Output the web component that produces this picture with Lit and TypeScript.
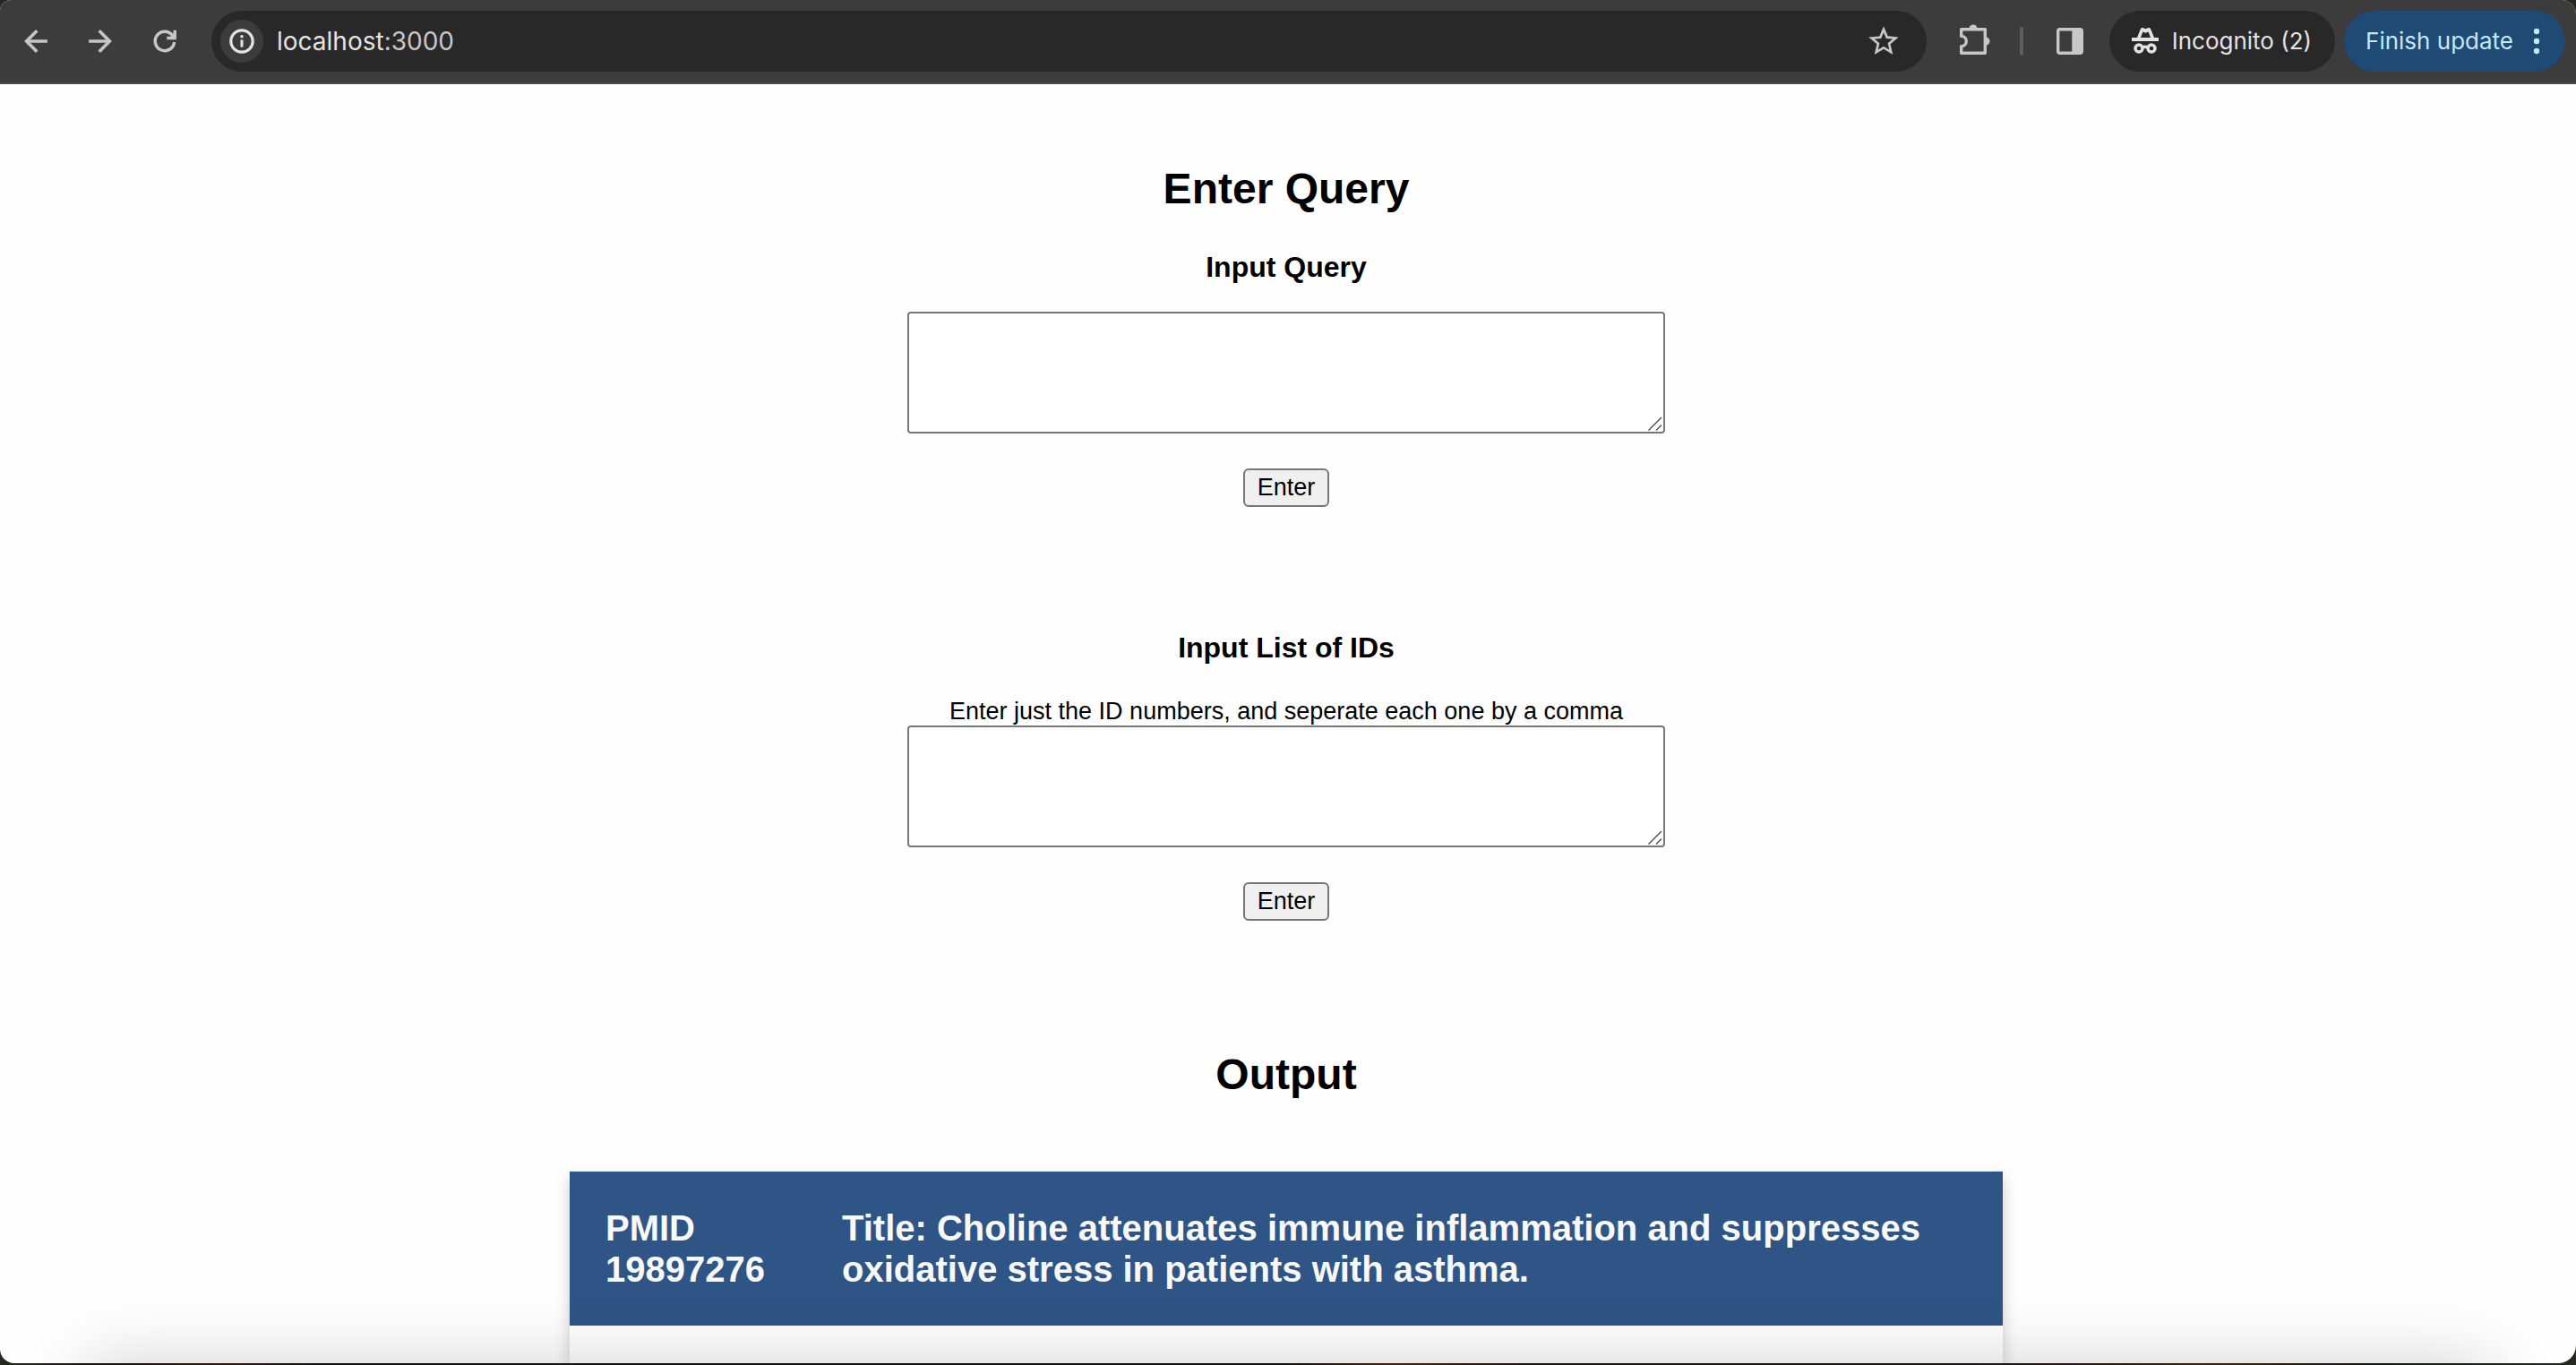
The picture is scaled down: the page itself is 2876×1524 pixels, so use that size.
import { LitElement, html, css, svg } from "lit";
import { customElement, property } from "lit/decorators.js";

const icons = {
  back: svg`<path stroke="currentColor" stroke-width=".3" d="M20 11H7.83l5.59-5.59L12 4l-8 8 8 8 1.410-1.410L7.830 13H20v-2z" />`,
  forward: svg`<path stroke="currentColor" stroke-width=".3" d="M4 11h12.170l-5.590-5.590L12 4l8 8-8 8-1.410-1.410L16.170 13H4v-2z" />`,
  star: svg`<path d="M22 9.24l-7.19-.62L12 2 9.19 8.63 2 9.24l5.46 4.73L5.82 21 12 17.27 18.18 21l-1.63-7.03L22 9.24zM12 15.4l-3.76 2.27 1-4.28-3.32-2.88 4.38-.38L12 6.1l1.71 4.04 4.38.38-3.32 2.88 1 4.28L12 15.4z" />`,
};

@customElement("browser-toolbar")
class BrowserToolbar extends LitElement {
  static styles = css`
    :host { display: block; font-family: Inter, "Liberation Sans", sans-serif; }
    .bar { display: flex; align-items: center; box-sizing: border-box; height: 94px; padding: 0 12px 0 14px; background: #3c3c3c; border-bottom: 2px solid #4a4a4a; }
    button { display: flex; flex: none; align-items: center; justify-content: center; margin: 0; padding: 0; border: 0; background: none; color: #c7c7c7; font: inherit; white-space: nowrap; }
    svg { display: block; flex: none; fill: currentColor; }
    .nav { display: flex; gap: 20px; }
    .nav button, .star, .tool { width: 52px; height: 52px; }
    .omnibox { flex: 1; display: flex; align-items: center; box-sizing: border-box; height: 68px; margin-left: 26px; padding: 0 22px 0 10px; border-radius: 34px; background: #282828; }
    .info { width: 48px; height: 48px; border-radius: 24px; background: #3c3c3c; color: #e3e3e3; }
    .url { flex: 1; padding-left: 15px; font-size: 28px; line-height: 34px; color: #c7c7c7; }
    .host { color: #e3e3e3; }
    .tools { display: flex; align-items: center; gap: 26px; padding: 0 18px 0 26px; }
    .rule { width: 4px; height: 32px; border-radius: 2px; background: #5e5e5e; }
    .pill { height: 68px; border-radius: 34px; font-size: 26px; line-height: 32px; }
    .incognito { gap: 14px; padding: 0 26px 0 24px; background: #282828; color: #e3e3e3; }
    .update { gap: 22px; margin-left: 10px; padding: 0 28px 0 24px; background: #1f4a73; color: #c2e7ff; }
  `;

  render() {
    return html`
      <header class="bar">
        <nav class="nav" aria-label="History">
          <button aria-label="Back"><svg width="38" height="38" viewBox="0 0 24 24">${icons.back}</svg></button>
          <button aria-label="Forward"><svg width="38" height="38" viewBox="0 0 24 24">${icons.forward}</svg></button>
          <button aria-label="Reload">
            <svg width="32" height="32" viewBox="0 0 32 32">
              <path fill="none" stroke="currentColor" stroke-width="3.5" d="M26.600 17A10.700 10.700 0 1 1 25 10.200L27 12.500M27.200 3.700V12.500H18.300" />
            </svg>
          </button>
        </nav>
        <div class="omnibox">
          <button class="info" aria-label="Site information">
            <svg width="28" height="28" viewBox="0 0 28 28">
              <circle cx="14" cy="14" r="12.200" fill="none" stroke="currentColor" stroke-width="3.200" />
              <circle cx="14" cy="8.700" r="1.800" />
              <path d="M12.500 12.500h3v8h-3z" />
            </svg>
          </button>
          <span class="url"><span class="host">localhost</span>:3000</span>
          <button class="star" aria-label="Bookmark this tab"><svg width="40" height="40" viewBox="0 0 24 24">${icons.star}</svg></button>
        </div>
        <div class="tools">
          <button class="tool" aria-label="Extensions">
            <svg width="40" height="40" viewBox="0 0 40 40">
              <path fill="none" stroke="currentColor" stroke-width="3.400" stroke-linejoin="round" d="M6.700 6.700H33.300V33.300H6.700V25.600A5.600 5.600 0 0 0 6.700 14.400Z" />
              <path d="M15.500 6a4.500 4.500 0 0 1 9 0zM34 15.500a4.500 4.500 0 0 1 0 9z" />
            </svg>
          </button>
          <span class="rule"></span>
          <button class="tool" aria-label="Side panel">
            <svg width="30" height="30" viewBox="0 0 30 30">
              <rect x="1.700" y="1.700" width="26.600" height="26.600" rx="2" fill="none" stroke="currentColor" stroke-width="3.400" />
              <path d="M17.300 2H28v26H17.300z" />
            </svg>
          </button>
        </div>
        <button class="pill incognito">
          <svg width="32" height="32" viewBox="0 0 32 32">
            <path fill-rule="evenodd" d="M1 12h6l3.700-9.200C11.300 1 12.500.600 14 1.200L16.500 2.200 19 1.200C20.500.600 21.700 1 22.300 2.800L26 12h5v4H1zM11 12h11l-2.400-6.500-3.100 1.300-3.100-1.300z" />
            <g fill="none" stroke="currentColor" stroke-width="3.500">
              <circle cx="9" cy="24" r="4" /><circle cx="23" cy="24" r="4" /><path d="M13 23q3-1.500 6 0" />
            </g>
          </svg>
          <span>Incognito (2)</span>
        </button>
        <button class="pill update">
          <span>Finish update</span>
          <svg width="8" height="32" viewBox="0 0 8 32"><circle cx="4" cy="5" r="3.200" /><circle cx="4" cy="16" r="3.200" /><circle cx="4" cy="27" r="3.200" /></svg>
        </button>
      </header>
    `;
  }
}

@customElement("query-form")
class QueryForm extends LitElement {
  @property() heading = "";
  @property() hint = "";

  static styles = css`
    :host { display: block; }
    .form { display: flex; flex-direction: column; align-items: center; }
    .heading { margin: 0 0 31px; font-size: 32px; line-height: 38px; font-weight: 700; }
    .heading.hinted { margin-bottom: 37px; }
    .hint { margin: 0; font-size: 27px; line-height: 31px; }
    .field { position: relative; display: flex; margin-bottom: 39px; }
    .box { box-sizing: border-box; width: 846px; height: 136px; margin: 0; padding: 4px; border: 2px solid #767676; border-radius: 4px; background: #fff; font: 27px/31px "Liberation Mono", monospace; outline: none; }
    .box::-webkit-resizer { background: transparent; }
    .grip { position: absolute; right: 3px; bottom: 3px; pointer-events: none; }
    .submit { padding: 4px 14px; border: 2px solid #767676; border-radius: 6px; background: #efefef; color: #000; font: 27px/31px "Liberation Sans", sans-serif; }
  `;

  render() {
    return html`
      <form class="form" @submit=${(e: Event) => e.preventDefault()}>
        <h2 class="heading ${this.hint ? "hinted" : ""}"><label for="text">${this.heading}</label></h2>
        ${this.hint ? html`<p class="hint" id="hint">${this.hint}</p>` : ""}
        <div class="field">
          <textarea class="box" id="text"></textarea>
          <svg class="grip" width="16" height="16" viewBox="0 0 16 16" fill="none" stroke="#555" stroke-width="1.500"><path d="M.500 15.500 15 1M9 15.500 15 9.500" /></svg>
        </div>
        <button class="submit" type="submit">Enter</button>
      </form>
    `;
  }
}

@customElement("app-root")
class AppRoot extends LitElement {
  static styles = css`
    :host { display: block; font-family: "Liberation Sans", Arial, sans-serif; color: #000; }
    .desktop { box-sizing: border-box; height: 100vh; padding-bottom: 2px; background: linear-gradient(90deg, #26291f, #16120f 4%, #2c1812 9%, #121212 12%, #121212 50%, #3a1f10 54%, #181212 60%, #1c1416 78%, #30200f 86%, #141615 92%, #26291f); }
    .window { position: relative; display: flex; flex-direction: column; height: 100%; overflow: hidden; border-radius: 12px 16px 20px 16px; background: #fefefe; }
    .page { flex: 1; display: flex; flex-direction: column; align-items: center; min-height: 0; padding: 89px 4px 0 0; overflow: hidden; }
    .title { flex: none; margin: 0; font-size: 48px; line-height: 56px; font-weight: 700; }
    .query { flex: none; margin-top: 40px; }
    .ids { flex: none; margin: 138px 0 144px; }
    .card { flex: 1 0 auto; box-sizing: border-box; width: 1600px; max-width: 100%; margin-top: 80px; background: #fefefe; box-shadow: 0 8px 16px rgba(0, 0, 0, 0.2); }
    .head { display: grid; grid-template-columns: 224px 1fr; gap: 40px; padding: 40px; background: #2f5586; color: #f8f8f8; font-size: 40px; line-height: 46px; font-weight: 700; }
    .cell { margin: 0; font: inherit; }
    .shade { position: absolute; top: 100%; left: 96px; right: 96px; height: 160px; box-shadow: 0 0 76px rgba(0, 0, 0, 0.18); pointer-events: none; }
  `;

  render() {
    return html`
      <div class="desktop">
        <div class="window">
          <browser-toolbar></browser-toolbar>
          <main class="page">
            <h1 class="title">Enter Query</h1>
            <query-form class="query" heading="Input Query"></query-form>
            <query-form class="ids" heading="Input List of IDs" hint="Enter just the ID numbers, and seperate each one by a comma"></query-form>
            <h1 class="title">Output</h1>
            <article class="card">
              <header class="head">
                <p class="cell">PMID 19897276</p>
                <h2 class="cell">Title: Choline attenuates immune inflammation and suppresses oxidative stress in patients with asthma.</h2>
              </header>
            </article>
          </main>
          <div class="shade"></div>
        </div>
      </div>
    `;
  }
}
